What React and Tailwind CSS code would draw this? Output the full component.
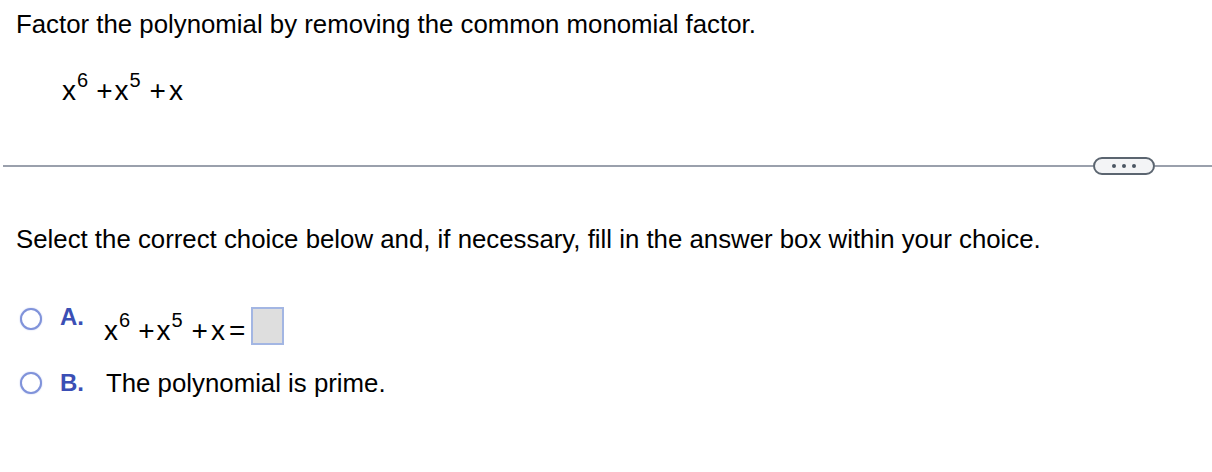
import React from "react"

function Poly({ tail }) {
    return (
        <span className="inline-flex items-baseline text-[28px] leading-[27px] text-black">
            <span>x</span>
            <span className="relative -top-[13px] text-[20px] ml-[1px]">6</span>
            <span className="ml-[8px]">+</span>
            <span className="ml-[2px]">x</span>
            <span className="relative -top-[13px] text-[20px] ml-[1px]">5</span>
            <span className="ml-[9px]">+</span>
            <span className="ml-[3px]">x</span>
            {tail}
        </span>
    )
}

function Radio() {
    return <span className="inline-block w-[22px] h-[22px] rounded-full border-2 border-[#8093da] bg-white shrink-0 shadow-[0_0_1.5px_#a9b6ea]"></span>
}

export default function App() {
    return (
        <div className="w-[1212px] h-[472px] bg-white text-black" style={{ fontFamily: '"Liberation Sans", Arial, sans-serif' }}>
            <div className="pt-[8px] pl-[16px] text-[25.8px] leading-[32px]">
                Factor the polynomial by removing the common monomial factor.
            </div>
            <div className="pl-[62px] mt-[37px] h-[27px]">
                <Poly />
            </div>

            {/* divider with the little ... pill */}
            <div className="flex items-center mt-[53px] pl-[3px]">
                <div className="flex-1 h-[2px] bg-[#9aa0ac]"></div>
                <button className="w-[62px] h-[18px] rounded-full border-2 border-[#5b6570] bg-[#f3f4f6] flex items-center justify-center gap-[6px]">
                    <span className="w-[4px] h-[4px] rounded-full bg-[#4b5563]"></span>
                    <span className="w-[4px] h-[4px] rounded-full bg-[#4b5563]"></span>
                    <span className="w-[4px] h-[4px] rounded-full bg-[#4b5563]"></span>
                </button>
                <div className="w-[57px] h-[2px] bg-[#9aa0ac]"></div>
            </div>

            <div className="pl-[16px] mt-[48px] text-[25.8px] leading-[32px]">
                Select the correct choice below and, if necessary, fill in the answer box within your choice.
            </div>

            {/* choice A */}
            <div className="flex items-start pl-[20px] mt-[52px] h-[40px]">
                <span className="mt-[1px]"><Radio /></span>
                <span className="ml-[18px] text-[24px] leading-[20px] font-bold text-[#3b4fb5]">A.</span>
                <span className="ml-[20px] mt-[10px]">
                    <Poly tail={
                        <>
                            <span className="ml-[4px]">=</span>
                            <span className="ml-[6px] self-start inline-block w-[33px] h-[38px] border-2 border-[#a3b6e3] bg-[#dedede] relative -top-[10px]"></span>
                        </>
                    } />
                </span>
            </div>

            {/* choice B */}
            <div className="flex items-center pl-[20px] mt-[20px] h-[32px]">
                <Radio />
                <span className="ml-[18px] text-[24px] leading-[32px] font-bold text-[#3b4fb5]">B.</span>
                <span className="ml-[22px] text-[25.8px] leading-[32px]">The polynomial is prime.</span>
            </div>
        </div>
    )
}
